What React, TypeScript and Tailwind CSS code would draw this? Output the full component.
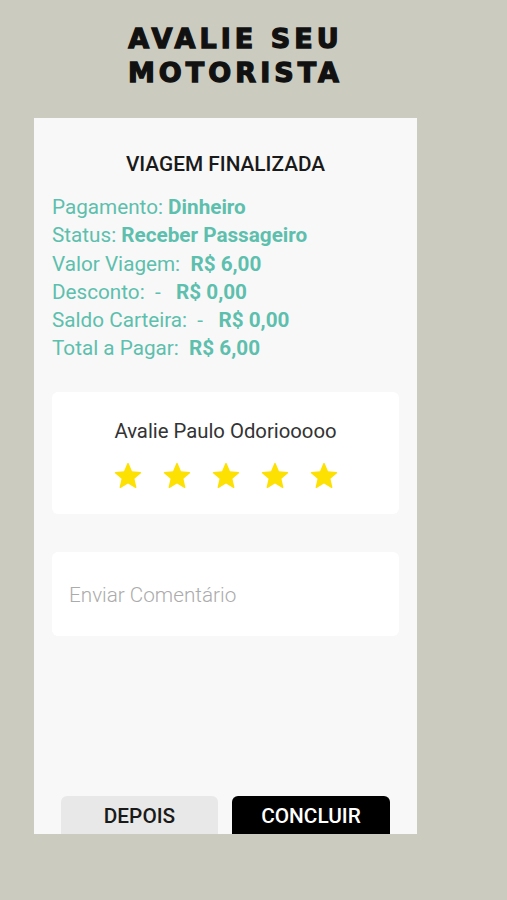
import React, { useState } from 'react';

const Star: React.FC<{ filled: boolean; onClick: () => void }> = ({ filled, onClick }) => (
  <button onClick={onClick} className="w-[34px] h-[34px] flex items-center justify-center">
    <svg viewBox="0 0 24 24" className="w-[34px] h-[34px]">
      <path
        d="M12 17.27l5.18 3.13c.38.23.85-.11.75-.54l-1.37-5.89 4.57-3.96c.34-.29.16-.84-.28-.88l-6.03-.52-2.36-5.56c-.17-.41-.75-.41-.92 0L9.18 8.61l-6.03.52c-.44.04-.62.59-.28.88l4.57 3.96-1.37 5.89c-.1.43.37.77.75.54L12 17.27z"
        fill={filled ? '#fde102' : '#dddddd'}
      />
    </svg>
  </button>
);

const App: React.FC = () => {
  const [rating, setRating] = useState(5);
  const [comment, setComment] = useState('');

  const rows = [
    { label: 'Pagamento: ', value: 'Dinheiro' },
    { label: 'Status: ', value: 'Receber Passageiro' },
    { label: 'Valor Viagem:  ', value: 'R$ 6,00' },
    { label: 'Desconto:  -   ', value: 'R$ 0,00' },
    { label: 'Saldo Carteira:  -   ', value: 'R$ 0,00' },
    { label: 'Total a Pagar:  ', value: 'R$ 6,00' },
  ];

  return (
    <div className="w-[507px] h-[900px] bg-[#cccbbf] flex flex-col overflow-hidden font-['Roboto',sans-serif]">
      <h1 className="w-[471px] pt-[22px] text-center font-['DejaVu_Sans',sans-serif] font-black text-[27px] leading-[34px] tracking-[0.15em] text-[#111] [-webkit-text-stroke:1.3px_#111]">
        AVALIE SEU
        <br />
        MOTORISTA
      </h1>

      <div className="ml-[34px] mt-[28px] w-[383px] h-[716px] bg-[#f8f8f8] flex flex-col overflow-hidden">
        <h2 className="pt-[34px] text-center text-[20.8px] leading-6 font-medium text-[#1a1a1a]">
          VIAGEM FINALIZADA
        </h2>

        <div className="mt-[17px] px-[18px] text-[20.7px] leading-[28.3px] text-[#5dbfad]">
          {rows.map((r) => (
            <div key={r.label} className="whitespace-pre">
              {r.label}
              <span className="font-bold">{r.value}</span>
            </div>
          ))}
        </div>

        <div className="mx-[18px] mt-[29px] h-[122px] bg-white rounded-md flex flex-col items-center">
          <p className="pt-[27px] text-[20.3px] leading-6 text-[#333]">Avalie Paulo Odoriooooo</p>
          <div className="mt-[16px] flex gap-[15px]">
            {[1, 2, 3, 4, 5].map((n) => (
              <Star key={n} filled={n <= rating} onClick={() => setRating(n)} />
            ))}
          </div>
        </div>

        <div className="mx-[18px] mt-[38px] h-[84px] bg-white rounded-md flex items-center pt-[4px]">
          <input
            value={comment}
            onChange={(e) => setComment(e.target.value)}
            placeholder="Enviar Comentário"
            className="w-full px-[17px] bg-transparent text-[20.7px] font-light text-[#333] placeholder:text-[#ababab] focus:outline-none"
          />
        </div>

        <div className="flex-1" />

        <div className="flex gap-[14px] pl-[27px] -mb-[6px]">
          <button className="w-[157px] h-[44px] bg-[#e8e8e8] rounded-md text-[20.8px] font-medium text-[#1a1a1a] pb-[3px]">
            DEPOIS
          </button>
          <button className="w-[158px] h-[44px] bg-black rounded-md text-[20.8px] font-medium text-white pb-[3px]">
            CONCLUIR
          </button>
        </div>
      </div>
    </div>
  );
};

export default App;
